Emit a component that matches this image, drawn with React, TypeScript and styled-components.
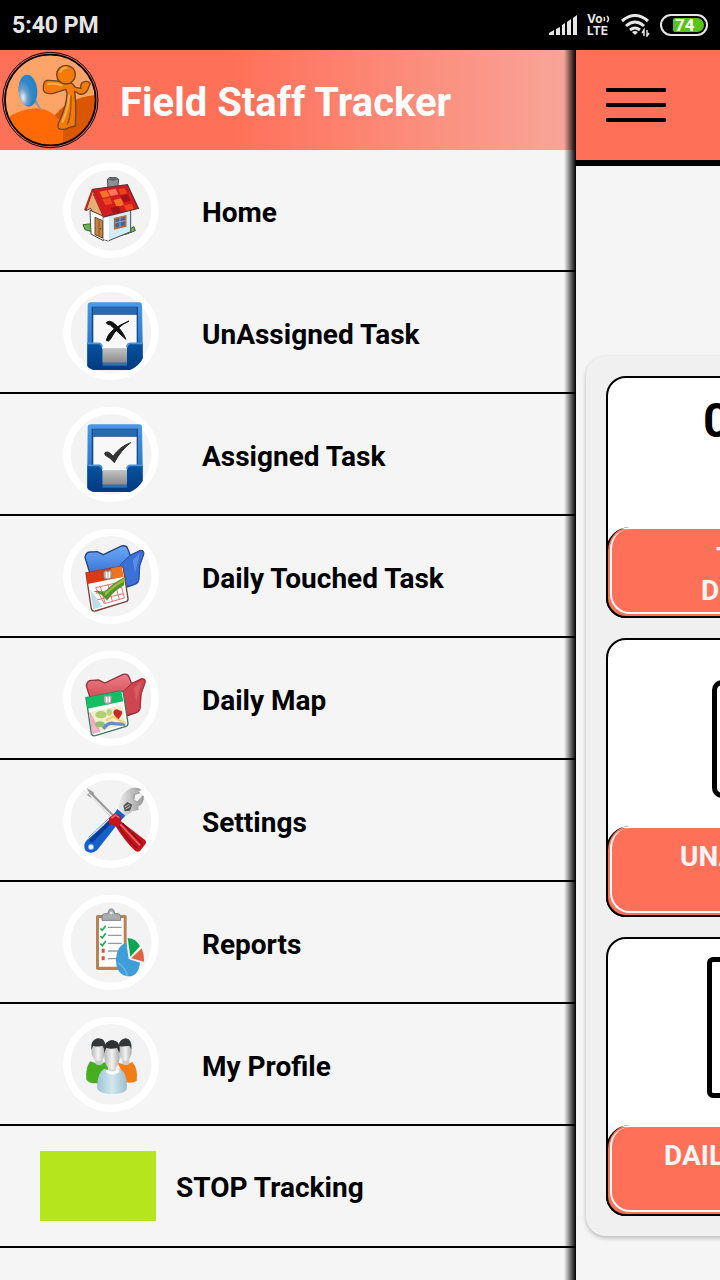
import React from 'react';
import styled, { createGlobalStyle } from 'styled-components';

const coral = '#ff7058';

const GlobalStyle = createGlobalStyle`
  *, *::before, *::after { box-sizing: border-box; }
  body {
    margin: 0;
    background: #f5f5f5;
    font-family: Roboto, "Liberation Sans", sans-serif;
    color: #000;
  }
`;

const Page = styled.div`
  display: flex;
  flex-direction: column;
  min-height: 100vh;
  overflow: hidden;
`;

const StatusBar = styled.header`
  display: flex;
  align-items: center;
  justify-content: space-between;
  height: 50px;
  padding: 0 12px;
  background: #000;
  color: #e6e6e6;
`;

const Clock = styled.time`
  padding-top: 2px;
  font-size: 23px;
  font-weight: 700;
  line-height: 28px;
`;

const StatusIcons = styled.div`
  display: flex;
  align-items: center;
  gap: 10px;
`;

const Lte = styled.div`
  display: flex;
  flex-direction: column;
  width: 24px;
  font-family: Inter, Roboto, sans-serif;
  font-size: 12px;
  font-weight: 700;
  line-height: 12px;
  white-space: nowrap;
`;

const VoLine = styled.span`
  display: flex;
  align-items: center;
`;

const Battery = styled.div`
  display: flex;
  justify-content: flex-end;
  width: 48px;
  height: 22px;
  padding: 2px;
  border: 2px solid #e6e6e6;
  border-radius: 11px;
`;

const Charge = styled.span`
  width: 31px;
  height: 14px;
  padding-left: 2px;
  border-radius: 2px 7px 7px 2px;
  background: #57c41a;
  color: #fff;
  font-size: 17px;
  font-weight: 700;
  line-height: 14px;
`;

const Body = styled.div`
  display: flex;
  flex: 1;
`;

const Drawer = styled.aside`
  position: relative;
  flex: 0 0 80%;
  background: #f5f5f5;

  &::after {
    content: "";
    position: absolute;
    top: 0;
    right: 0;
    bottom: 0;
    width: 12px;
    background: linear-gradient(to right, rgba(0, 0, 0, 0), rgba(0, 0, 0, 0.5) 50%, #000);
    pointer-events: none;
  }
`;

const Brand = styled.div`
  display: flex;
  align-items: center;
  gap: 20px;
  height: 100px;
  background: linear-gradient(to right, ${coral} 40%, #f8a69b);
`;

const BrandName = styled.h1`
  margin: 0;
  padding-top: 6px;
  color: #fff;
  font-size: 40px;
  line-height: 48px;
  font-weight: 700;
`;

const Menu = styled.ul`
  margin: 0;
  padding: 0;
  list-style: none;
`;

const MenuLink = styled.a<{ $wide?: boolean }>`
  display: flex;
  align-items: center;
  gap: ${(p) => (p.$wide ? 20 : 43)}px;
  height: 122px;
  padding-top: ${(p) => (p.$wide ? 0 : 2)}px;
  padding-left: ${(p) => (p.$wide ? 40 : 63)}px;
  border-bottom: 2px solid #000;
  color: #000;
  font-size: 28px;
  font-weight: 700;
  line-height: 36px;
  text-decoration: none;
`;

const MenuLabel = styled.span`
  padding-top: 3px;
`;

const TrackingState = styled.span`
  width: 116px;
  height: 70px;
  background: #b5e61d;
`;

const Main = styled.main`
  flex: 1;
  min-width: 0;
  overflow: hidden;
`;

const Toolbar = styled.div`
  display: flex;
  align-items: center;
  height: 116px;
  padding: 0 30px;
  border-bottom: 6px solid #000;
  background: ${coral};
`;

const MenuButton = styled.button`
  display: flex;
  flex-direction: column;
  gap: 11px;
  width: 60px;
  padding: 0;
  border: 0;
  background: none;
`;

const Bar = styled.span`
  width: 60px;
  height: 4px;
  border-radius: 1px;
  background: #000;
`;

const Panel = styled.section`
  display: flex;
  flex-direction: column;
  gap: 20px;
  width: calc(100% + 40px);
  margin: 190px 0 44px 10px;
  padding: 20px;
  border-radius: 20px;
  background: #f0f0f0;
  box-shadow: 0 2px 4px rgba(0, 0, 0, 0.25);
`;

const Card = styled.article<{ $height: number }>`
  display: flex;
  flex-direction: column;
  justify-content: space-between;
  height: ${(p) => p.$height}px;
  margin-right: -60px;
  border: 2px solid #000;
  border-radius: 20px;
  background: #fff;
`;

const CardValue = styled.strong`
  padding: 15px 0 0 95px;
  font-size: 48px;
  line-height: 56px;
`;

const Glyph = styled.span<{ $top: number; $left: number; $height: number; $radius: number }>`
  width: 100px;
  height: ${(p) => p.$height}px;
  margin: ${(p) => p.$top}px 0 0 ${(p) => p.$left}px;
  border: 5px solid #000;
  border-radius: ${(p) => p.$radius}px;
`;

const CardFooter = styled.footer`
  height: 91px;
  margin: 0 0 -2px -2px;
  padding: 2px 0 2px 2px;
  border: solid #000;
  border-width: 0 0 2px 2px;
  border-radius: 24px 0 0 20px;
  background: linear-gradient(#fff 2px, ${coral} 2px);
`;

const CardCaption = styled.div`
  display: flex;
  flex-direction: column;
  height: 100%;
  padding-top: 12px;
  border: solid #fff;
  border-width: 0 0 2px 2px;
  border-radius: 20px 0 0 20px;
  color: #f5f5f5;
  font-size: 28px;
  font-weight: 700;
  line-height: 33px;
`;

const CaptionLine = styled.span<{ $indent: number }>`
  padding-left: ${(p) => p.$indent}px;
`;

function MenuIcon({ top, children }: { top: number; children: React.ReactNode }) {
  return (
    <svg width="96" height="96" viewBox={`39 ${top} 288 288`} aria-hidden="true">
      <circle cx="183" cy={top + 142} r="132" fill="#f3f3f3" stroke="#fff" strokeWidth="22" />
      {children}
    </svg>
  );
}

function HomeIcon() {
  return (
    <MenuIcon top={24}>
      <path d="M99 209l26-3 0 24-20-6zM222 232l30-17 4 12-26 10-22 5z" fill="#61ba43" stroke="#4c5a4a" strokeWidth="3" />
      <path d="M120 166l40 15v76l-37-20z" fill="#fffdfb" stroke="#454b50" strokeWidth="3" />
      <path d="M160 184l82-20v66l-68 28-14-5z" fill="#d4ebf8" stroke="#454b50" strokeWidth="3" />
      <path d="M160 184l17-5v78l-17-4z" fill="#fff" />
      <path d="M172 73l6-5h20l8 5-3 28-29-4z" fill="#8c9294" stroke="#454b50" strokeWidth="3" />
      <path d="M171 73l17-6 18 6-17 6z" fill="#62696b" />
      <path d="M128 103l104-14 33 71-104 26z" fill="#d51b20" stroke="#633" strokeWidth="4" />
      <path d="M148 110l22-4 10 18-22 5zM190 135l23-5 9 20-22 5z" fill="#f37427" />
      <path d="M173 106l24-5 8 17-23 5z" fill="#f9785a" />
      <path d="M157 132l23-5 8 19-22 5zM222 151l23-5 7 16-23 5zM206 103l18-3 7 15-20 4z" fill="#e9481e" />
      <path d="M181 159l24-6 8 19-23 5zM210 123l22-6 10 20-20 5z" fill="#a51319" />
      <path d="M128 104l-20 63 14-7 3 8 36 16z" fill="#e7ad72" stroke="#56423b" strokeWidth="3" />
      <path d="M128 104l-23 62M131 116l30 68" fill="none" stroke="#c92524" strokeWidth="6" />
      <path d="M135 187l23 10v52l-23-10z" fill="#c78342" stroke="#704c30" strokeWidth="3" />
      <path d="M147 193v49" stroke="#8c552d" strokeWidth="3" /><circle cx="151" cy="221" r="2" fill="#333" />
      <path d="M194 191l33-8v30l-33 8z" fill="#4a6292" stroke="#b16e3a" strokeWidth="5" />
      <path d="M210 187v29M196 203l30-6" stroke="#94aacf" strokeWidth="3" />
    </MenuIcon>
  );
}

/* Both tray icons share this artwork and differ only in the mark on the paper. */
function TrayIcon({ top, shift, children }: { top: number; shift: number; children: React.ReactNode }) {
  return (
    <MenuIcon top={top}>
      <defs>
        <linearGradient id="tray" x1="0" y1="0" x2="0" y2="1"><stop stopColor="#4a98e6" /><stop offset="1" stopColor="#1c63b8" /></linearGradient>
        <linearGradient id="trayFront" x1="0" y1="0" x2="0" y2="1"><stop stopColor="#07539f" /><stop offset="1" stopColor="#003a80" /></linearGradient>
        <linearGradient id="trayPaper" x1="0" y1="0" x2="0" y2="1"><stop stopColor="#c2c2c2" /><stop offset="1" stopColor="#888" /></linearGradient>
      </defs>
      <g transform={`translate(0 ${shift})`}>
        <path d="M123 67h143q10 0 10 10l2 112v48q-12 22-38 33H132q-16-4-20-12l0-70 1-111q0-10 10-10z" fill="url(#tray)" />
        <path d="M125 80h139v112H125z" fill="#174a89" />
        <path d="M129 82h131v20H129z" fill="#286ab2" />
        <path d="M130 104h130v102H130z" fill="#f8f8f8" />
        <path d="M158 205h73v46h-73z" fill="url(#trayPaper)" />
        <path d="M112 190h35q9 2 9 12v46h75v-46q0-10 9-12h38v45q-12 24-39 35H132q-16-4-20-13z" fill="url(#trayFront)" />
        <path d="M112 190h35q9 2 9 12M231 202q0-10 9-12h38" fill="none" stroke="#4b91da" strokeWidth="5" />
        <path d="M158 253h73" stroke="#3170b6" strokeWidth="8" />
        {children}
      </g>
    </MenuIcon>
  );
}

function FolderIcon({ top, red }: { top: number; red?: boolean }) {
  const id = red ? 'redFolder' : 'blueFolder';
  return (
    <MenuIcon top={top}>
      <defs>
        <linearGradient id={id} x1="0" y1="0" x2="0" y2="1">
          <stop stopColor={red ? '#ee7e87' : '#6baaf8'} /><stop offset="1" stopColor={red ? '#bd2532' : '#2455c4'} />
        </linearGradient>
      </defs>
      <g transform={red ? 'translate(4 10)' : undefined}>
        <path d="M105 112q3-17 17-16l20-1 18 9 55-26q14-3 18 8l8 20 29-14q12-3 11 10l-12 34-3 44q-1 8-9 12l-42 15-93-40z" fill={`url(#${id})`} stroke={red ? '#8e3440' : '#2c467d'} strokeWidth="4" />
        <path d="M210 135l30-29 30-13q12-3 11 9l-12 34-3 44-9 12-35 9z" fill={red ? '#cf4550' : '#3b70d8'} stroke={red ? '#a62e39' : '#2c50a7'} strokeWidth="3" />
        <path d="M248 120l22-20-15 60z" fill={red ? '#d95d65' : '#5a8ee6'} />
      </g>
      <g transform={red ? 'translate(0 -1)' : undefined}>
        <path d="M108 159l105-20q6 0 7 6l14 91q0 8-6 9l-92 28q-9 2-12-6z" fill="#fff" stroke={red ? '#3e7a5b' : '#7c3e34'} strokeWidth="4" />
        <path d="M108 159l106-20 6 31-107 22z" fill={red ? '#13bf65' : '#db3a12'} />
        {!red && <path d="M183 145l31-6 6 31-35 6z" fill="#ee7422" />}
        <path d="M161 158q4-10 12-4 8-7 13 3l-2 17q-11 9-22 0z" fill="#bbb" stroke="#777" strokeWidth="2" />
        <path d="M170 157v16M178 157v16" stroke="#fff" strokeWidth="4" />
        {red ? (
          <>
            <path d="M119 202l98-21 10 57-95 28z" fill="#f1edcd" />
            <path d="M119 204l31 56-22 6zM125 225l23 34" fill="#f3b7cc" stroke="#eba2bf" strokeWidth="3" />
            <ellipse cx="153" cy="210" rx="17" ry="11" fill="#afcf72" /><ellipse cx="150" cy="239" rx="15" ry="9" fill="#8fc270" />
            <ellipse cx="178" cy="203" rx="8" ry="10" fill="#bdd282" />
            <path d="M160 252q15-21 32-15l34 2" fill="none" stroke="#648bd0" strokeWidth="10" />
            <path d="M168 228l20-12 38 20" fill="none" stroke="#ead36c" strokeWidth="6" />
            <path d="M206 224q-18-14-16-23 7-12 17-4 15 1 7 15z" fill="#c7282c" />
          </>
        ) : (
          <>
            <path d="M137 203l74-17 12 48-60 17zM151 199l14 50M174 193l13 51M195 189l13 49M137 220l80-19M140 240l80-19" fill="none" stroke="#e77271" strokeWidth="3" />
            <path d="M120 207l37 53-28 8z" fill="#bddde9" />
            <path d="M130 214q16-5 32 3 26-28 62-46l-2 25q-32 18-51 46-13-20-41-28z" fill="#55942b" />
            <path d="M164 219q27-25 59-45v10q-34 19-57 44z" fill="#9abd47" />
          </>
        )}
      </g>
    </MenuIcon>
  );
}

function SettingsIcon() {
  return (
    <MenuIcon top={24}>
      <defs>
        <linearGradient id="steel"><stop stopColor="#eee" /><stop offset="1" stopColor="#969696" /></linearGradient>
      </defs>
      <path d="M204 128l8-26q7-22 32-33 21-5 31 6l-22 10-4 17 13 10 17-20 3 2q-1 24-17 31l1 10-19 4-20 15z" fill="url(#steel)" />
      <path d="M249 87l17-8 14 15-13 19-19-7z" fill="#aaa" /><path d="M256 89l18-5 2 8-14 17-9-5z" fill="#f3f3f3" />
      <path d="M220 122l12-11 15 8-7 18-16 2z" fill="#555" /><path d="M224 126l14-8M227 132l14-8" stroke="#bbb" strokeWidth="3" />
      <path d="M202 132l24 20-20 21-65 83q-17 14-34 1-10-16 3-31l71-61z" fill="#1560ca" />
      <path d="M190 160l-65 66" stroke="#003c98" strokeWidth="12" strokeLinecap="round" /><path d="M186 151l-70 66" stroke="#5da7ff" strokeWidth="3" />
      <circle cx="123" cy="246" r="8" fill="#f4f4f4" stroke="#6aadf5" strokeWidth="3" />
      <path d="M99 73l15 20 13 5 58 61 8-8-60-61-3-9-20-12 8 14-7 7z" fill="#9b9b9b" />
      <path d="M117 86l70 70" stroke="#eee" strokeWidth="4" />
      <path d="M177 160l17-15 18 8 2 17 72 56q4 5 1 10l-17 22q-7 5-15-1-30-28-59-75l-19-4z" fill="#c4141c" />
      <path d="M207 183q28 47 54 65M217 174l58 60" fill="none" stroke="#861018" strokeWidth="4" />
      <path d="M211 178l59 63M184 160l12-10 12 8" fill="none" stroke="#f06368" strokeWidth="5" />
    </MenuIcon>
  );
}

function ReportsIcon() {
  return (
    <MenuIcon top={15}>
      <rect x="138" y="75" width="92" height="165" rx="5" fill="#b68256" />
      <path d="M147 84h74v146h-74z" fill="#fff" />
      <path d="M156 91v-11q0-8 8-9h10q1-14 10-14t10 14h10q8 1 8 9v11z" fill="#a9aeb2" stroke="#797f83" strokeWidth="3" />
      <circle cx="184" cy="69" r="4" fill="#eee" />
      <path d="M174 112h41M174 136h41M174 160h41M174 183h30M174 206h27" stroke="#929aa3" strokeWidth="4" />
      <path d="M151 115l6 6 10-14M151 138l6 6 10-14M151 161l6 6 10-14" fill="none" stroke="#1bae5e" strokeWidth="5" />
      <path d="M155 176h9v12h-9zM155 199h9v12h-9z" fill="#dd5132" />
      <path d="M229 158l7 49 34 11q-5 42-36 41-36-5-36-49 2-43 31-52z" fill="#3f9dd7" />
      <path d="M203 218q22 12 29 39" fill="none" stroke="#67b5e5" strokeWidth="5" />
      <path d="M233 145q22-2 37 24l-29 31z" fill="#0ca653" /><path d="M275 175q8 18 7 40l-38-10z" fill="#df6542" />
    </MenuIcon>
  );
}

function ProfileIcon() {
  return (
    <MenuIcon top={21}>
      <defs>
        <linearGradient id="face"><stop stopColor="#b8b8b8" /><stop offset=".5" stopColor="#f3f3f3" /><stop offset="1" stopColor="#aaa" /></linearGradient>
        <linearGradient id="shirt"><stop stopColor="#9ec3d4" /><stop offset=".5" stopColor="#d1e7ef" /><stop offset="1" stopColor="#9dbfce" /></linearGradient>
      </defs>
      <path d="M121 154l24 8 30-8q7 12 4 26l-32 39q-27 4-38-10-3-39 12-55z" fill="#47ae20" />
      <path d="M203 158l25 6 19-8q18 20 13 57-12 8-31 4z" fill="#f27c16" />
      <path d="M136 142h22v20q-11 7-22 0zM217 142h21v20q-10 7-21 0z" fill="#ccc" />
      <ellipse cx="145" cy="124" rx="21" ry="29" fill="url(#face)" />
      <ellipse cx="226" cy="124" rx="19" ry="29" fill="url(#face)" />
      <path d="M124 119q-4-28 18-34 21-2 24 18l-2 16-7-12q-17 5-27 0zM206 110q0-21 20-25 21 1 18 33l-6-11q-17 3-30 2z" fill="#343638" />
      <path d="M163 176l24 12 22-12q24 14 22 57-2 18-43 19-47-1-47-22 1-43 22-54z" fill="url(#shirt)" />
      <path d="M174 162h24v24q-12 9-24 0z" fill="#d6d6d6" />
      <ellipse cx="186" cy="141" rx="23" ry="37" fill="url(#face)" />
      <path d="M163 129q-5-34 23-39 29 3 22 39l-7-15q-21 5-32-1z" fill="#303133" />
      <path d="M170 178q16 13 34 0l4 8q-21 16-41 0z" fill="#fff" />
    </MenuIcon>
  );
}

function Logo() {
  return (
    <svg width="100" height="100" viewBox="0 0 300 300" aria-hidden="true">
      <defs>
        <clipPath id="logoDisc"><circle cx="151" cy="150" r="135" /></clipPath>
        <radialGradient id="dish" cx=".25" cy=".7" r=".6"><stop stopColor="#e4f3fa" /><stop offset=".5" stopColor="#6f9dc4" /><stop offset="1" stopColor="#2f86cb" /></radialGradient>
      </defs>
      <g clipPath="url(#logoDisc)">
        <path d="M0 0h300v300H0z" fill="#ffa468" />
        <path d="M155 210q44-72 145-76v166H180z" fill="#d95700" />
        <path d="M0 300v-80q55-45 110-45 45 2 79 47v78z" fill="#ff6906" />
      </g>
      <circle cx="151" cy="150" r="143" fill="none" stroke="#000" strokeWidth="3" />
      <circle cx="151" cy="150" r="136" fill="none" stroke="#000" strokeWidth="5" />
      <path d="M99 149l25 30M108 151l10 24" stroke="#8d9499" strokeWidth="4" />
      <ellipse cx="84" cy="122" rx="28" ry="48" fill="#2383cc" transform="rotate(-5 84 122)" />
      <ellipse cx="79" cy="124" rx="23" ry="43" fill="url(#dish)" transform="rotate(-5 79 124)" />
      <g fill="#f47b08" stroke="#6f4423" strokeWidth="4" strokeLinejoin="round">
        <path d="M197 118L160 130Q135 134 130 120 128 96 140 91 170 90 190 97L212 98Q222 104 226 112L243 115Q240 102 248 97 262 90 271 100L262 122Q252 136 238 132L224 124Q229 160 226 228L208 232Q195 242 176 236 170 228 180 210 200 165 201 130z" />
        <circle cx="198" cy="74" r="28" />
      </g>
      <path d="M213 136q2 50-8 84M211 188q-5 24-10 36" fill="none" stroke="#8b4b16" strokeWidth="3" />
      <path d="M181 66q6-14 18-13M145 102q20-4 40 4M207 136q-2 42-20 80" fill="none" stroke="#ffaf50" strokeWidth="6" strokeLinecap="round" />
    </svg>
  );
}

const menu: { label: string; icon: React.ReactNode }[] = [
  { label: 'Home', icon: <HomeIcon /> },
  {
    label: 'UnAssigned Task',
    icon: (
      <TrayIcon top={15} shift={0}>
        <path d="M169 128q7-8 19-1 27 20 40 51-22-19-47-43-10-1-12-7zM237 123q-36 16-56 55-6 9-12 3 5-32 68-58z" fill="#111" stroke="#111" strokeWidth="3" />
      </TrayIcon>
    ),
  },
  {
    label: 'Assigned Task',
    icon: (
      <TrayIcon top={21} shift={6}>
        <path d="M166 151q10-5 23 12 21-30 53-41-29 22-49 60-10-14-27-22-4-6 0-9z" fill="#333" stroke="#333" strokeWidth="3" />
      </TrayIcon>
    ),
  },
  { label: 'Daily Touched Task', icon: <FolderIcon top={27} /> },
  { label: 'Daily Map', icon: <FolderIcon top={18} red /> },
  { label: 'Settings', icon: <SettingsIcon /> },
  { label: 'Reports', icon: <ReportsIcon /> },
  { label: 'My Profile', icon: <ProfileIcon /> },
];

export default function App() {
  return (
    <Page>
      <GlobalStyle />
      <StatusBar>
        <Clock>5:40 PM</Clock>
        <StatusIcons>
          <svg width="28" height="20" viewBox="0 0 28 20" fill="#e6e6e6" aria-hidden="true">
            <path d="M0 20v-2l5-3v5zM7 14l4-2v8H7zM13 10l3-2v12h-3zM18 7l4-3v16h-4zM24 3l4-3v20h-4z" />
          </svg>
          <Lte>
            <VoLine>
              Vo
              <svg width="7" height="8" viewBox="0 0 7 8" fill="none" stroke="#e6e6e6" strokeWidth="1.5" aria-hidden="true">
                <path d="M1 2q1 2 0 4M4 1q3 3 0 6" />
              </svg>
            </VoLine>
            <span>LTE</span>
          </Lte>
          <svg width="29" height="23" viewBox="0 0 29 23" fill="none" stroke="#e6e6e6" strokeWidth="3" aria-hidden="true">
            <path d="M1 7q13-11 26 0M5 12q9-8 18 0M9 16q5-4 10 0" />
            <path d="M11 18q3-2 6 0l-3 3z" fill="#e6e6e6" stroke="none" />
            <path d="M23 22v-6l-2 3M26 16v6l2-3" strokeWidth="1.5" />
          </svg>
          <Battery><Charge>74</Charge></Battery>
        </StatusIcons>
      </StatusBar>
      <Body>
        <Drawer>
          <Brand>
            <Logo />
            <BrandName>Field Staff Tracker</BrandName>
          </Brand>
          <nav>
            <Menu>
              {menu.map(({ label, icon }) => (
                <li key={label}>
                  <MenuLink href="#">
                    {icon}
                    <MenuLabel>{label}</MenuLabel>
                  </MenuLink>
                </li>
              ))}
              <li>
                <MenuLink href="#" $wide>
                  <TrackingState />
                  <MenuLabel>STOP Tracking</MenuLabel>
                </MenuLink>
              </li>
            </Menu>
          </nav>
        </Drawer>
        <Main>
          <Toolbar>
            <MenuButton type="button" aria-label="Toggle menu">
              <Bar /><Bar /><Bar />
            </MenuButton>
          </Toolbar>
          <Panel>
            <Card $height={242}>
              <CardValue>0</CardValue>
              <CardFooter>
                <CardCaption>
                  <CaptionLine $indent={104}>T</CaptionLine>
                  <CaptionLine $indent={89}>D</CaptionLine>
                </CardCaption>
              </CardFooter>
            </Card>
            <Card $height={279}>
              <Glyph $top={40} $left={104} $height={118} $radius={10} />
              <CardFooter>
                <CardCaption><CaptionLine $indent={68}>UNA</CaptionLine></CardCaption>
              </CardFooter>
            </Card>
            <Card $height={279}>
              <Glyph $top={18} $left={99} $height={141} $radius={6} />
              <CardFooter>
                <CardCaption><CaptionLine $indent={52}>DAIL</CaptionLine></CardCaption>
              </CardFooter>
            </Card>
          </Panel>
        </Main>
      </Body>
    </Page>
  );
}
